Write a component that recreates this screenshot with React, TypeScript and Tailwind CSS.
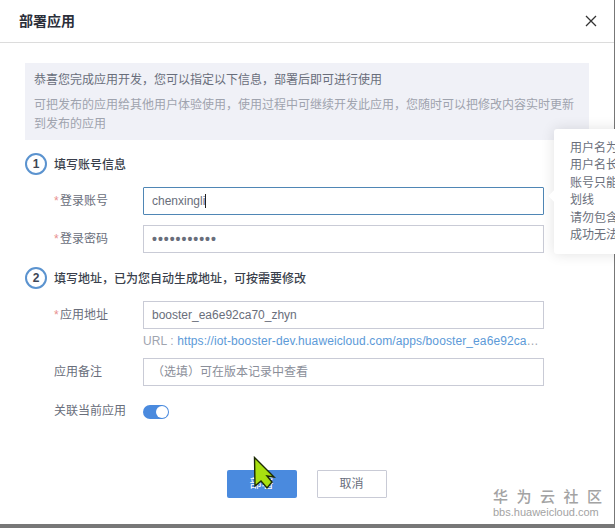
const font = '[font-family:"Liberation_Sans","Noto_Sans_CJK_SC",sans-serif]';

function Step({ num, title }: { num: number; title: string }) {
  return (
    <div className="flex h-[22px] items-center">
      <span className="flex h-[22px] w-[22px] items-center justify-center rounded-full border-2 border-[#5b93cf] text-[12px] font-bold text-[#3f4654]">
        {num}
      </span>
      <span className="ml-[7px] mt-[2px] text-[12px] font-medium text-[#3a3f4c]">{title}</span>
    </div>
  );
}

function Row({
  label,
  required,
  children,
}: {
  label: string;
  required?: boolean;
  children: React.ReactNode;
}) {
  return (
    <div className="flex items-center pl-[29px]">
      <label className="relative w-[89px] text-[12px] text-[#696e7b]">
        {required && <span className="absolute top-0 text-[#e8908f]">*</span>}
        <span className={required ? "pl-[6px]" : ""}>{label}</span>
      </label>
      {children}
    </div>
  );
}

function Field({
  value,
  active,
  muted,
  dots,
}: {
  value: string;
  active?: boolean;
  muted?: boolean;
  dots?: boolean;
}) {
  return (
    <div
      className={`flex h-[28px] w-[401px] items-center border pl-[8px] ${
        active ? "rounded-[1px] border-[#4f86b5]" : "border-[#c9cbd6]"
      } ${muted ? "text-[#8a8e99]" : "text-[#696e7b]"} ${
        dots ? "text-[14px] font-bold tracking-[1px] text-[#333]" : "text-[12px]"
      }`}
    >
      {value}
      {active && <span className="h-[14px] w-px bg-[#222]" />}
    </div>
  );
}

export default function App() {
  return (
    <div className={`relative flex h-[528px] w-[615px] flex-col overflow-hidden bg-white ${font}`}>
      <div className="flex flex-1 flex-col border-r border-[#777]">
        <div className="flex h-[43px] shrink-0 items-center justify-between border-b border-[#dcdcdc] pl-[19px] pr-[17px]">
          <h1 className="mt-[1px] text-[14px] font-bold text-[#2b2f3a]">部署应用</h1>
          <svg width="12" height="12" viewBox="0 0 12 12" className="text-[#333]">
            <path d="M1 1l10 10M11 1L1 11" stroke="currentColor" strokeWidth="1.3" fill="none" />
          </svg>
        </div>

        <div className="px-[25px] pt-[20px]">
          <div className="h-[77px] w-[564px] bg-[#f0f1f7] pl-[9px] pr-[10px] pt-[8px] text-[12px] leading-[19px]">
            <p className="text-[#696e7b]">恭喜您完成应用开发，您可以指定以下信息，部署后即可进行使用</p>
            <p className="mt-[6px] text-[#9fa3ae]">
              可把发布的应用给其他用户体验使用，使用过程中可继续开发此应用，您随时可以把修改内容实时更新到发布的应用
            </p>
          </div>

          <div className="mt-[13px]">
            <Step num={1} title="填写账号信息" />
          </div>
          <div className="mt-[12px] flex flex-col gap-[10px]">
            <Row label="登录账号" required>
              <Field value="chenxingli" active />
            </Row>
            <Row label="登录密码" required>
              <Field value="•••••••••••" dots />
            </Row>
          </div>

          <div className="mt-[14px]">
            <Step num={2} title="填写地址，已为您自动生成地址，可按需要修改" />
          </div>
          <div className="mt-[12px]">
            <Row label="应用地址" required>
              <Field value="booster_ea6e92ca70_zhyn" />
            </Row>
          </div>
          <p className="ml-[118px] mt-[4px] h-[17px] w-[401px] truncate text-[12px] leading-[17px] tracking-[0.1px] text-[#a0a4af]">
            URL : <span className="text-[#5c9ad8]">https://iot-booster-dev.huaweicloud.com/apps/booster_ea6e92ca70_zhyn</span>
          </p>
          <div className="mt-[8px]">
            <Row label="应用备注">
              <Field value="（选填）可在版本记录中查看" muted />
            </Row>
          </div>
          <div className="mt-[16px]">
            <Row label="关联当前应用">
              <span className="mt-[1px] flex h-[14px] w-[26px] items-center justify-end rounded-full bg-[#4a8ade] pr-[1px]">
                <span className="h-[12px] w-[12px] rounded-full bg-white" />
              </span>
            </Row>
          </div>

          <div className="mt-[50px] flex justify-center gap-[20px] pr-[1px] text-[12px]">
            <button className="h-[28px] w-[70px] rounded-[2px] bg-[#4a8ade] text-white">部署</button>
            <button className="h-[28px] w-[70px] rounded-[1px] border border-[#c9cbd6] text-[#696e7b]">取消</button>
          </div>
        </div>
      </div>
      <div className="h-[4px] shrink-0 bg-[#777]" />

      {/* tooltip runs off the window */}
      <div className="absolute left-[554px] top-[129px] h-[125px] w-[120px] rounded-[3px] bg-white pl-[16px] pt-[11px] text-[12px] leading-[17.4px] text-[#6a6f7b] shadow-[0_0_14px_rgba(0,0,0,0.12)]">
        <p>用户名为</p>
        <p>用户名长</p>
        <p>账号只能</p>
        <p>划线</p>
        <p>请勿包含</p>
        <p>成功无法</p>
        <span className="absolute -left-[4px] top-[63px] h-[8px] w-[8px] rotate-45 bg-white" />
      </div>

      {/* forum watermark */}
      <div className="absolute left-[493px] top-[488px] text-[#a3a3a3]">
        <div className="text-[15px] font-medium leading-[18px] tracking-[8.5px] whitespace-nowrap">华为云社区</div>
        <div className="text-[11px] leading-[13px]">bbs.huaweicloud.com</div>
      </div>

      {/* pointer of the screen recorder */}
      <svg width="26" height="36" viewBox="0 0 26 36" className="absolute left-[253px] top-[456px]">
        <path d="M1.5 1.5L2 30L8 25L14 32L19 26L14 20L21 21Z" fill="#a8e010" stroke="#1c2a05" strokeWidth="1.4" />
      </svg>
    </div>
  );
}
